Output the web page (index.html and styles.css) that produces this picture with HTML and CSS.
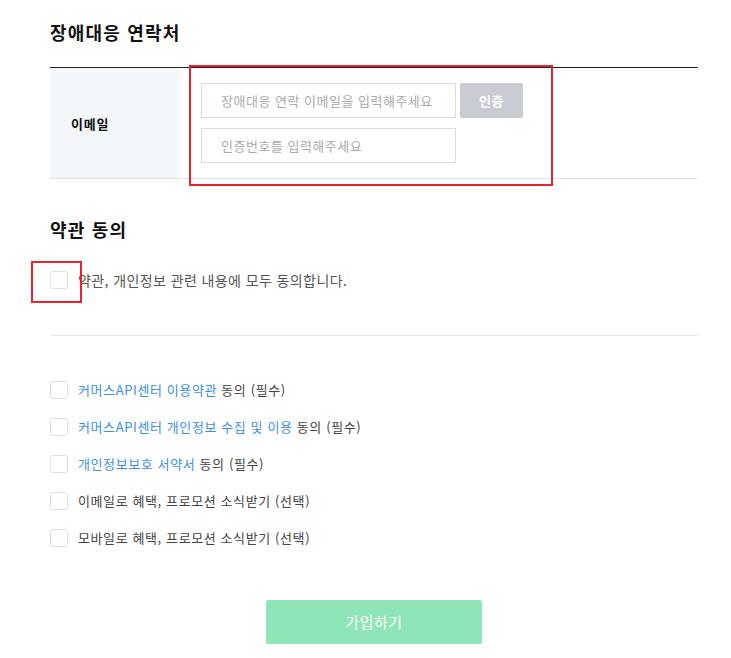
FILE: index.html
```html
<!DOCTYPE html>
<html lang="ko">
<head>
<meta charset="utf-8">
<link rel="stylesheet" href="styles.css">
</head>
<body>
<div class="page">
  <h2 class="title first">장애대응 연락처</h2>
  <div class="table">
    <div class="label">이메일</div>
    <div class="field">
      <div class="inline">
        <div class="input">장애대응 연락 이메일을 입력해주세요</div>
        <div class="btn-auth">인증</div>
      </div>
      <div class="input">인증번호를 입력해주세요</div>
    </div>
    <div class="mark mark-field"></div>
  </div>

  <h2 class="title second">약관 동의</h2>
  <div class="all-row">
    <span class="box"></span>
    <span class="txt all">약관, 개인정보 관련 내용에 모두 동의합니다.</span>
    <div class="mark mark-box"></div>
  </div>
  <div class="divider"></div>

  <ul class="list">
    <li><span class="box"></span><span class="txt"><span class="link">커머스API센터 이용약관</span> 동의 (필수)</span></li>
    <li><span class="box"></span><span class="txt"><span class="link">커머스API센터 개인정보 수집 및 이용</span> 동의 (필수)</span></li>
    <li><span class="box"></span><span class="txt"><span class="link">개인정보보호 서약서</span> 동의 (필수)</span></li>
    <li><span class="box"></span><span class="txt">이메일로 혜택, 프로모션 소식받기 (선택)</span></li>
    <li><span class="box"></span><span class="txt">모바일로 혜택, 프로모션 소식받기 (선택)</span></li>
  </ul>

  <div class="submit-wrap"><div class="submit">가입하기</div></div>
</div>
</body>
</html>
```

FILE: styles.css
```css
* { box-sizing: border-box; }
body {
  margin: 0;
  background: #fff;
  font-family: "Noto Sans CJK KR", "Noto Sans", sans-serif;
  color: #333;
}
.page {
  width: 648px;
  margin-left: 50px;
  position: relative;
}
.title {
  margin: 0;
  font-size: 18px;
  font-weight: 700;
  color: #111;
  line-height: 22px;
  letter-spacing: 1.2px;
}
.title.first { padding-top: 21px; }
.table {
  margin-top: 24px;
  border-top: 1px solid #222;
  border-bottom: 1px solid #e2e2e2;
  display: flex;
  position: relative;
}
.label {
  width: 129px;
  background: #f4f7fa;
  display: flex;
  align-items: center;
  padding-left: 21px;
  font-size: 13px;
  font-weight: 700;
  color: #111;
  letter-spacing: 0.8px;
}
.field {
  padding: 15px 0 15px 22px;
  display: flex;
  flex-direction: column;
  gap: 10px;
}
.inline { display: flex; gap: 4px; }
.input {
  width: 255px;
  height: 35px;
  border: 1px solid #dcdcdc;
  padding-left: 19px;
  font-size: 13px;
  color: #aaa;
  line-height: 33px;
  letter-spacing: 0.5px;
}
.btn-auth {
  width: 63px;
  height: 35px;
  background: #c9cbd3;
  color: #fff;
  font-size: 13px;
  font-weight: 700;
  text-align: center;
  line-height: 35px;
  border-radius: 2px;
  letter-spacing: 0.5px;
}
.mark {
  position: absolute;
  border: 2px solid #e8232b;
}
.mark-field { left: 139px; top: -3px; width: 364px; height: 121px; }
.title.second { margin-top: 39px; }
.all-row {
  margin-top: 31px;
  display: flex;
  align-items: center;
  height: 18px;
  position: relative;
}
.box {
  width: 18px;
  height: 18px;
  border: 1px solid #e0e0e0;
  border-radius: 3px;
  background: #fff;
  flex: none;
}
.txt {
  margin-left: 10px;
  font-size: 13px;
  color: #555;
  line-height: 18px;
  letter-spacing: 0.6px;
}
.txt.all { font-size: 14px; letter-spacing: 0.4px; }
.mark-box { left: -19px; top: -10px; width: 51px; height: 42px; }
.divider {
  margin-top: 46px;
  border-top: 1px solid #e6e6e6;
}
.list {
  list-style: none;
  margin: 45px 0 0;
  padding: 0;
  display: flex;
  flex-direction: column;
  gap: 19px;
}
.list li {
  display: flex;
  align-items: center;
  height: 18px;
}
.list .txt { color: #444; }
.link { color: #3c8fe3; }
.submit-wrap {
  margin-top: 53px;
  padding-left: 216px;
}
.submit {
  width: 216px;
  height: 44px;
  background: #8ee6b6;
  border-radius: 2px;
  color: #fff;
  font-size: 15px;
  text-align: center;
  line-height: 44px;
  letter-spacing: 0.5px;
}
```
